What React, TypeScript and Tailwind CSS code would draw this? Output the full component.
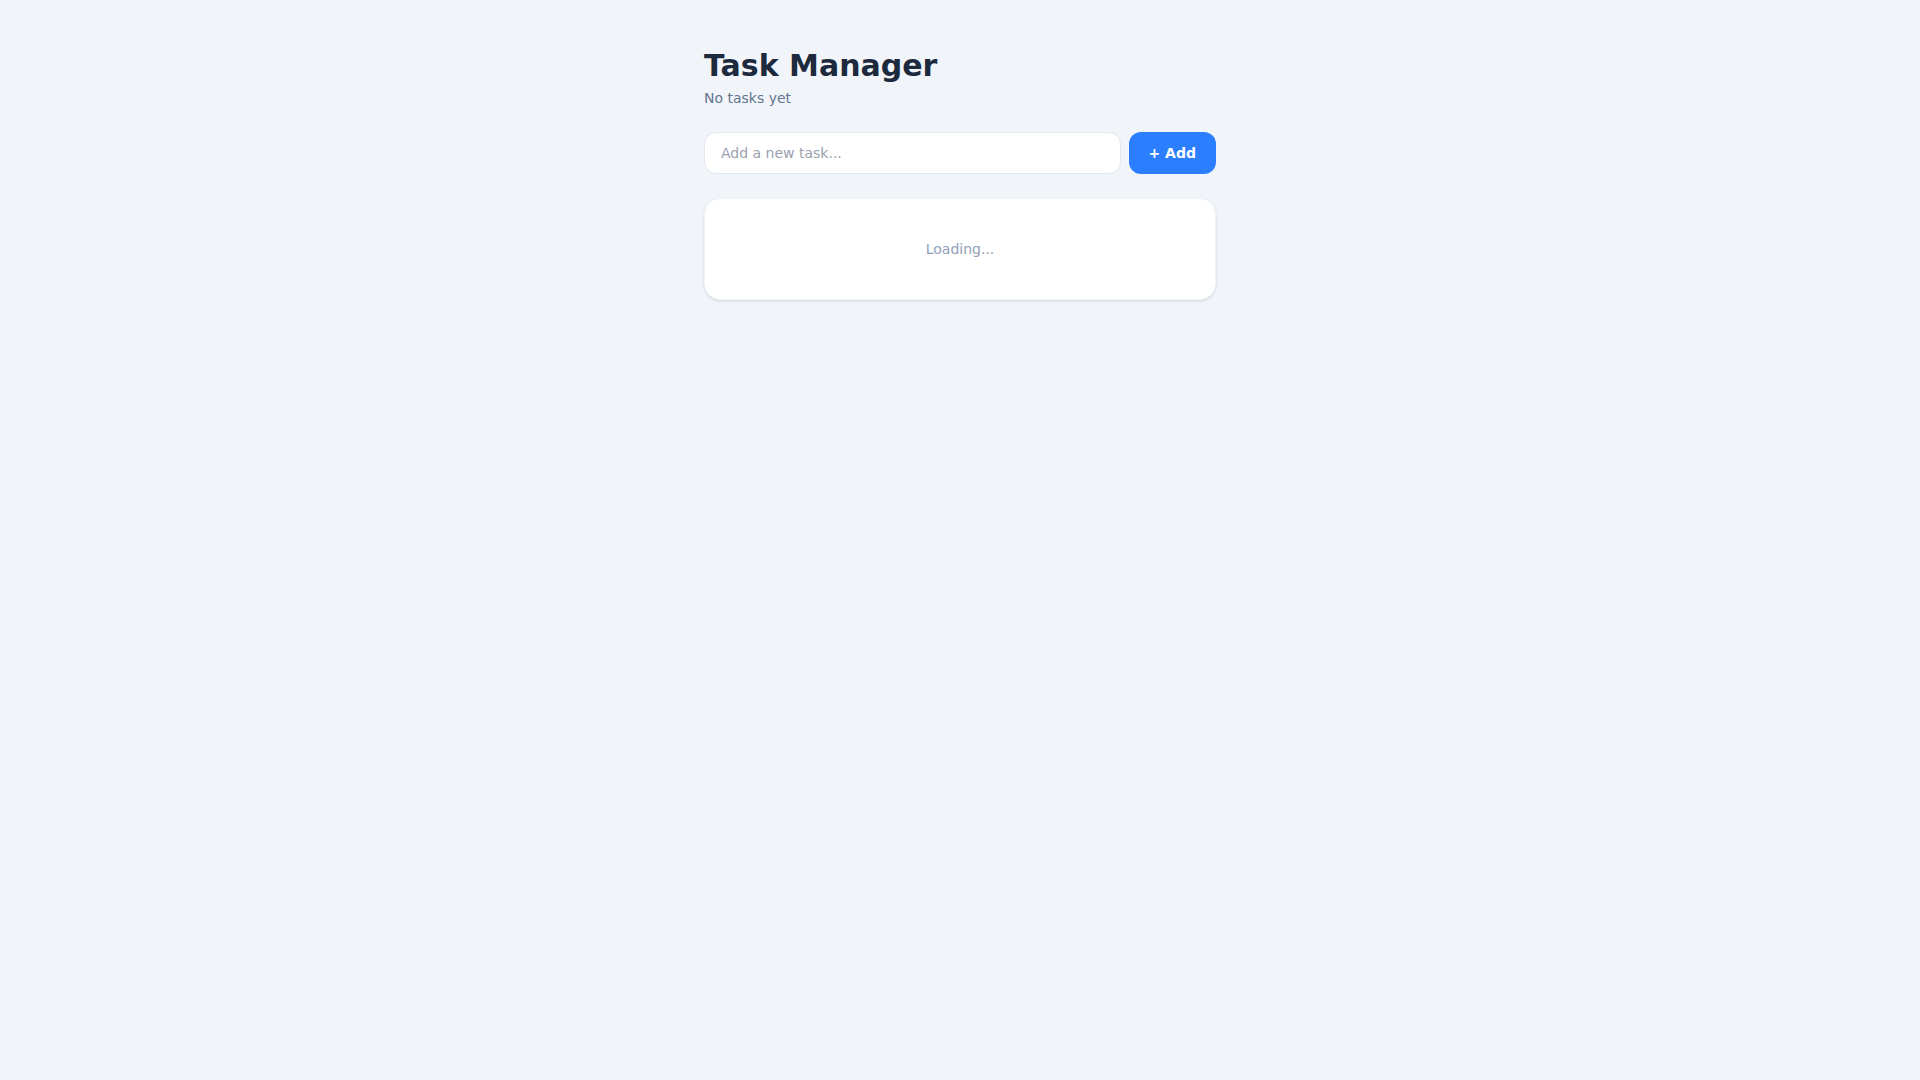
import { useState } from 'react';

export default function App() {
  const [text, setText] = useState('');

  return (
    <div className="min-h-screen bg-slate-100 font-['DejaVu_Sans',sans-serif]">
      <div className="max-w-lg mx-auto py-12">
        {/* Header */}
        <h1 className="text-3xl font-bold text-slate-800">Task Manager</h1>
        <p className="mt-1 text-sm text-slate-500">No tasks yet</p>

        {/* New task form */}
        <form
          className="mt-6 flex gap-2"
          onSubmit={e => {
            e.preventDefault();
            setText('');
          }}
        >
          <input
            value={text}
            onChange={e => setText(e.target.value)}
            placeholder="Add a new task..."
            className="flex-1 px-4 py-2.5 text-sm rounded-xl border border-slate-200 bg-white text-slate-800 placeholder:text-gray-400 outline-none"
          />
          <button
            type="submit"
            className="px-5 py-2.5 text-sm font-semibold text-white bg-blue-500 rounded-xl"
          >
            + Add
          </button>
        </form>

        {/* Task list */}
        <div className="mt-6 bg-white rounded-2xl border border-slate-100 shadow-sm py-10 text-center text-sm text-slate-400">
          Loading...
        </div>
      </div>
    </div>
  );
}
